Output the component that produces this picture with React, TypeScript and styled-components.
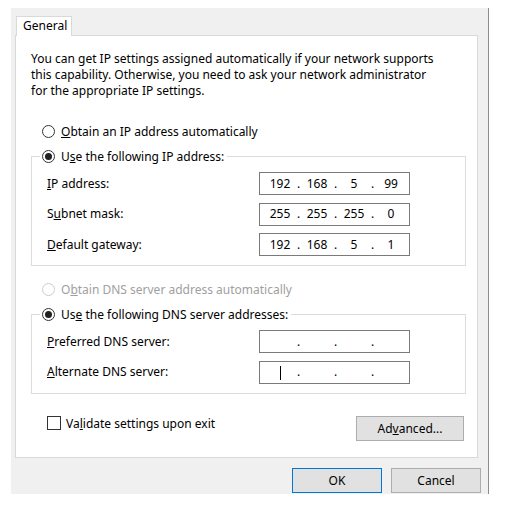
import React from "react";
import styled, { createGlobalStyle } from "styled-components";

const GlobalStyle = createGlobalStyle`
  body {
    margin: 0;
    background: #ffffff;
    font-family: "Noto Sans", "Liberation Sans", sans-serif;
    font-size: 12px;
    color: #000000;
  }
`;

const Dialog = styled.div`
  box-sizing: border-box;
  margin: 8px 0 0 11px;
  width: 478px;
  height: 486px;
  padding: 8px 7px 0 4px;
  background: #f0f0f0;
  border-right: 1px solid #8c8c8c;
  display: flex;
  flex-direction: column;
`;

const TabStrip = styled.div`
  display: flex;
  padding-left: 1px;
`;

const Tab = styled.div`
  position: relative;
  z-index: 1;
  box-sizing: border-box;
  width: 56px;
  height: 20px;
  margin-bottom: -1px;
  padding: 1px 0 0 6px;
  background: #ffffff;
  border: 1px solid #d9d9d9;
  border-bottom: none;
  line-height: 16px;
`;

const Panel = styled.div`
  box-sizing: border-box;
  width: 463px;
  height: 423px;
  padding: 15px 11px 0 15px;
  background: #ffffff;
  border: 1px solid #d9d9d9;
  display: flex;
  flex-direction: column;
`;

const Intro = styled.p`
  margin: 0;
  line-height: 16px;
`;

const RadioRow = styled.label<{ $disabled?: boolean; $gap?: number }>`
  display: flex;
  align-items: center;
  gap: 6px;
  height: 16px;
  margin-top: ${({ $gap }) => $gap ?? 0}px;
  padding-left: 11px;
  color: ${({ $disabled }) => ($disabled ? "#a0a0a0" : "#000000")};
`;

const RadioDot = styled.span<{ $checked?: boolean; $disabled?: boolean }>`
  box-sizing: border-box;
  width: 13px;
  height: 13px;
  border-radius: 50%;
  border: 1px solid ${({ $disabled }) => ($disabled ? "#cccccc" : "#333333")};
  background: #ffffff;
  display: flex;
  align-items: center;
  justify-content: center;

  &::after {
    content: "";
    display: ${({ $checked }) => ($checked ? "block" : "none")};
    width: 7px;
    height: 7px;
    border-radius: 50%;
    background: #222222;
  }
`;

const Group = styled.fieldset<{ $gap?: number }>`
  box-sizing: border-box;
  width: 435px;
  margin: ${({ $gap }) => $gap ?? 0}px 0 0 0;
  padding: 8px 0 9px 15px;
  border: 1px solid #dcdcdc;
  min-width: 0;
`;

/* the legend is offset from the fieldset's content edge, so pull it back
   so the radio sits 10px in from the group border */
const Legend = styled.legend`
  margin-left: -7px;
  padding: 0 3px 0 2px;

  ${RadioRow} {
    padding-left: 0;
  }
`;

const FieldGrid = styled.div`
  display: grid;
  grid-template-columns: 212px 151px;
  grid-auto-rows: 23px;
  row-gap: 7.5px;
  align-items: center;
`;

const FieldLabel = styled.span`
  line-height: 16px;
`;

const IpBox = styled.div`
  box-sizing: border-box;
  height: 23px;
  padding-left: 5px;
  border: 1px solid #7a7a7a;
  background: #ffffff;
  display: grid;
  grid-template-columns: 30px 7px 30px 7px 30px 7px 30px;
  align-items: center;
`;

const Octet = styled.span`
  text-align: center;
  line-height: 16px;
`;

const Dot = styled.span`
  text-align: center;
  line-height: 16px;
`;

const Caret = styled.span`
  display: inline-block;
  width: 1px;
  height: 14px;
  background: #000000;
  vertical-align: middle;
`;

const BottomRow = styled.div`
  display: flex;
  justify-content: space-between;
  align-items: flex-start;
  margin-top: 22px;
  padding: 0 2px 0 16px;
`;

const CheckRow = styled.label`
  display: flex;
  align-items: center;
  gap: 5px;
  height: 15px;
`;

const CheckBox = styled.span`
  box-sizing: border-box;
  width: 14px;
  height: 14px;
  border: 1px solid #333333;
  background: #ffffff;
`;

const Button = styled.button<{ $width: number; $default?: boolean }>`
  box-sizing: border-box;
  width: ${({ $width }) => $width}px;
  height: 25px;
  padding: 0;
  background: #e1e1e1;
  border: 1px solid ${({ $default }) => ($default ? "#0078d7" : "#adadad")};
  font-family: inherit;
  font-size: 12px;
  color: #000000;
`;

const ButtonRow = styled.div`
  display: flex;
  justify-content: flex-end;
  gap: 9px;
  margin-top: 10px;
`;

type IpProps = { octets?: string[]; caret?: boolean };

function IpField({ octets = ["", "", "", ""], caret }: IpProps) {
  return (
    <IpBox>
      {octets.map((o, i) => (
        <React.Fragment key={i}>
          {i > 0 && <Dot>.</Dot>}
          <Octet>{i === 0 && caret ? <Caret /> : o}</Octet>
        </React.Fragment>
      ))}
    </IpBox>
  );
}

export default function App() {
  return (
    <>
      <GlobalStyle />
      <Dialog>
        <TabStrip>
          <Tab>General</Tab>
        </TabStrip>
        <Panel>
          <Intro>
            You can get IP settings assigned automatically if your network supports
            <br />
            this capability. Otherwise, you need to ask your network administrator
            <br />
            for the appropriate IP settings.
          </Intro>

          <RadioRow $gap={24}>
            <RadioDot />
            <span>
              <u>O</u>btain an IP address automatically
            </span>
          </RadioRow>

          <Group $gap={9}>
            <Legend>
              <RadioRow>
                <RadioDot $checked />
                <span>
                  U<u>s</u>e the following IP address:
                </span>
              </RadioRow>
            </Legend>
            <FieldGrid>
              <FieldLabel>
                <u>I</u>P address:
              </FieldLabel>
              <IpField octets={["192", "168", "5", "99"]} />
              <FieldLabel>
                S<u>u</u>bnet mask:
              </FieldLabel>
              <IpField octets={["255", "255", "255", "0"]} />
              <FieldLabel>
                <u>D</u>efault gateway:
              </FieldLabel>
              <IpField octets={["192", "168", "5", "1"]} />
            </FieldGrid>
          </Group>

          <RadioRow $disabled $gap={15}>
            <RadioDot $disabled />
            <span>
              O<u>b</u>tain DNS server address automatically
            </span>
          </RadioRow>

          <Group $gap={9}>
            <Legend>
              <RadioRow>
                <RadioDot $checked />
                <span>
                  Us<u>e</u> the following DNS server addresses:
                </span>
              </RadioRow>
            </Legend>
            <FieldGrid>
              <FieldLabel>
                <u>P</u>referred DNS server:
              </FieldLabel>
              <IpField />
              <FieldLabel>
                <u>A</u>lternate DNS server:
              </FieldLabel>
              <IpField caret />
            </FieldGrid>
          </Group>

          <BottomRow>
            <CheckRow>
              <CheckBox />
              <span>
                Va<u>l</u>idate settings upon exit
              </span>
            </CheckRow>
            <Button $width={108}>
              Ad<u>v</u>anced...
            </Button>
          </BottomRow>
        </Panel>
        <ButtonRow>
          <Button $width={90} $default>
            OK
          </Button>
          <Button $width={90}>Cancel</Button>
        </ButtonRow>
      </Dialog>
    </>
  );
}
